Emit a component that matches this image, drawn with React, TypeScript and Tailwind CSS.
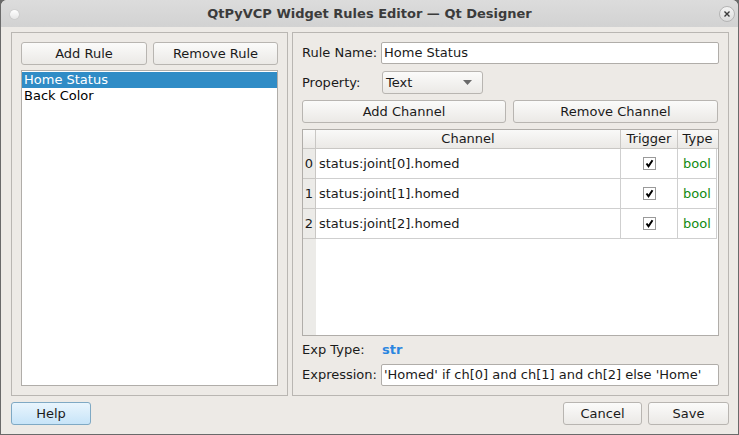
import React from "react";

const font = { fontFamily: '"DejaVu Sans", "Liberation Sans", sans-serif' };

function Btn({ children, className = "" }: { children: React.ReactNode; className?: string }) {
  return (
    <div
      className={`flex h-[23px] items-center justify-center rounded-[3px] border border-[#b8b5b1] bg-gradient-to-b from-[#fbfbfa] to-[#ebe9e6] text-[13px] text-[#1a1a1a] ${className}`}
    >
      {children}
    </div>
  );
}

function Check() {
  return (
    <div className="flex h-[13px] w-[13px] items-center justify-center border border-[#9a9a9a] bg-white">
      <svg width="9" height="9" viewBox="0 0 9 9">
        <path d="M1.5 4.5 L3.5 7.2 L7.5 1.2" fill="none" stroke="#000" strokeWidth="2" />
      </svg>
    </div>
  );
}

const rows = ["status:joint[0].homed", "status:joint[1].homed", "status:joint[2].homed"];

export default function App() {
  return (
    <div style={font} className="h-[435px] w-[739px] overflow-hidden bg-[#6a6a6a] p-px pt-0">
      <div className="flex h-full flex-col overflow-hidden rounded-t-[6px] bg-[#edeae6]">
        {/* title bar */}
        <div className="relative flex h-[27px] shrink-0 items-center justify-center bg-gradient-to-b from-[#dcdcdc] to-[#d2d2d2]">
          <div className="absolute left-[9px] top-[10px] h-[9px] w-[9px] rounded-full bg-gradient-to-b from-[#ffffff] to-[#e6e6e6] shadow-[0_0_1px_#8a8a8a]" />
          <span className="text-[13px] font-bold text-[#3b3b3b]">QtPyVCP Widget Rules Editor — Qt Designer</span>
          <div className="absolute right-[3px] top-[6px] flex h-[16px] w-[16px] items-center justify-center rounded-full border border-[#b4b4b4] bg-gradient-to-b from-[#f4f4f4] to-[#dcdcdc]">
            <svg width="8" height="8" viewBox="0 0 8 8">
              <path d="M1.5 1.5 L6.5 6.5 M6.5 1.5 L1.5 6.5" stroke="#3a3a3a" strokeWidth="1.4" />
            </svg>
          </div>
        </div>

        {/* body */}
        <div className="flex flex-1 flex-col pl-[10px] pr-[9px] pt-[5px]">
          <div className="flex h-[364px] gap-[4px]">
            {/* left group */}
            <div className="flex w-[277px] flex-col border border-[#b9b6b2] p-[9px]">
              <div className="flex gap-[6px]">
                <Btn className="w-[126px]">Add Rule</Btn>
                <Btn className="w-[125px]">Remove Rule</Btn>
              </div>
              <div className="mt-[5px] flex-1 border border-[#b0ada9] bg-white pt-px text-[13px] leading-[16px]">
                <div className="h-[16px] bg-[#308cc6] pl-[2px] text-white">Home Status</div>
                <div className="pl-[2px] text-black">Back Color</div>
              </div>
            </div>

            {/* right group */}
            <div className="flex w-[437px] flex-col border border-[#b9b6b2] p-[9px] text-[13px] text-[#1a1a1a]">
              <div className="flex h-[22px] items-center">
                <span className="w-[79px]">Rule Name:</span>
                <div className="flex h-[22px] flex-1 items-center rounded-[2px] border border-[#b0ada9] bg-white pl-[2px]">
                  Home Status
                </div>
              </div>
              <div className="mt-[7px] flex h-[23px] items-center">
                <span className="w-[80px]">Property:</span>
                <div className="flex h-[23px] w-[101px] items-center justify-between rounded-[3px] border border-[#b8b5b1] bg-gradient-to-b from-[#fbfbfa] to-[#ebe9e6] pl-[3px] pr-[10px]">
                  <span>Text</span>
                  <svg width="9" height="5" viewBox="0 0 9 5">
                    <path d="M0 0 H9 L4.5 5 Z" fill="#6a6a6a" />
                  </svg>
                </div>
              </div>
              <div className="mt-[6px] flex gap-[7px]">
                <Btn className="w-[204px]">Add Channel</Btn>
                <Btn className="w-[205px]">Remove Channel</Btn>
              </div>

              {/* table */}
              <div className="mt-[6px] flex h-[207px] flex-col border border-[#b0ada9] bg-white">
                <div className="flex h-[19px] border-b border-[#c9c7c4] bg-gradient-to-b from-[#f9f9f8] to-[#ebe9e6]">
                  <div className="w-[13px] border-r border-[#c9c7c4]" />
                  <div className="flex w-[305px] items-center justify-center border-r border-[#c9c7c4]">Channel</div>
                  <div className="flex w-[57px] items-center justify-center border-r border-[#c9c7c4]">Trigger</div>
                  <div className="flex w-[39px] items-center justify-center">Type</div>
                </div>
                {rows.map((r, i) => (
                  <div key={r} className="flex h-[30px]">
                    <div className="flex w-[13px] items-center justify-center border-b border-r border-[#c9c7c4] bg-[#ecebe8]">
                      {i}
                    </div>
                    <div className="flex w-[305px] items-center border-b border-r border-[#cfcfcf] pl-[3px]">{r}</div>
                    <div className="flex w-[57px] items-center justify-center border-b border-r border-[#cfcfcf]">
                      <Check />
                    </div>
                    <div className="flex w-[39px] items-center justify-center border-b border-r border-[#cfcfcf] text-[#118b11]">
                      bool
                    </div>
                  </div>
                ))}
                <div className="flex flex-1">
                  <div className="w-[13px] bg-[#ecebe8]" />
                </div>
              </div>

              <div className="mt-[6px] flex h-[16px] items-center">
                <span className="w-[80px]">Exp Type:</span>
                <span className="font-bold text-[#2b86e0]">str</span>
              </div>
              <div className="mt-[6px] flex h-[22px] items-center">
                <span className="w-[79px]">Expression:</span>
                <div className="flex h-[22px] flex-1 items-center rounded-[2px] border border-[#b0ada9] bg-white pl-[2px]">
                  'Homed' if ch[0] and ch[1] and ch[2] else 'Home'
                </div>
              </div>
            </div>
          </div>

          {/* bottom buttons */}
          <div className="mt-[6px] flex">
            <div className="flex h-[23px] w-[80px] items-center justify-center rounded-[3px] border border-[#7fa9c4] bg-gradient-to-b from-[#e9f5fd] to-[#c7e4f8] text-[13px] text-[#1a1a1a]">
              Help
            </div>
            <div className="flex-1" />
            <Btn className="w-[79px]">Cancel</Btn>
            <Btn className="ml-[6px] w-[81px]">Save</Btn>
          </div>
        </div>
      </div>
    </div>
  );
}
